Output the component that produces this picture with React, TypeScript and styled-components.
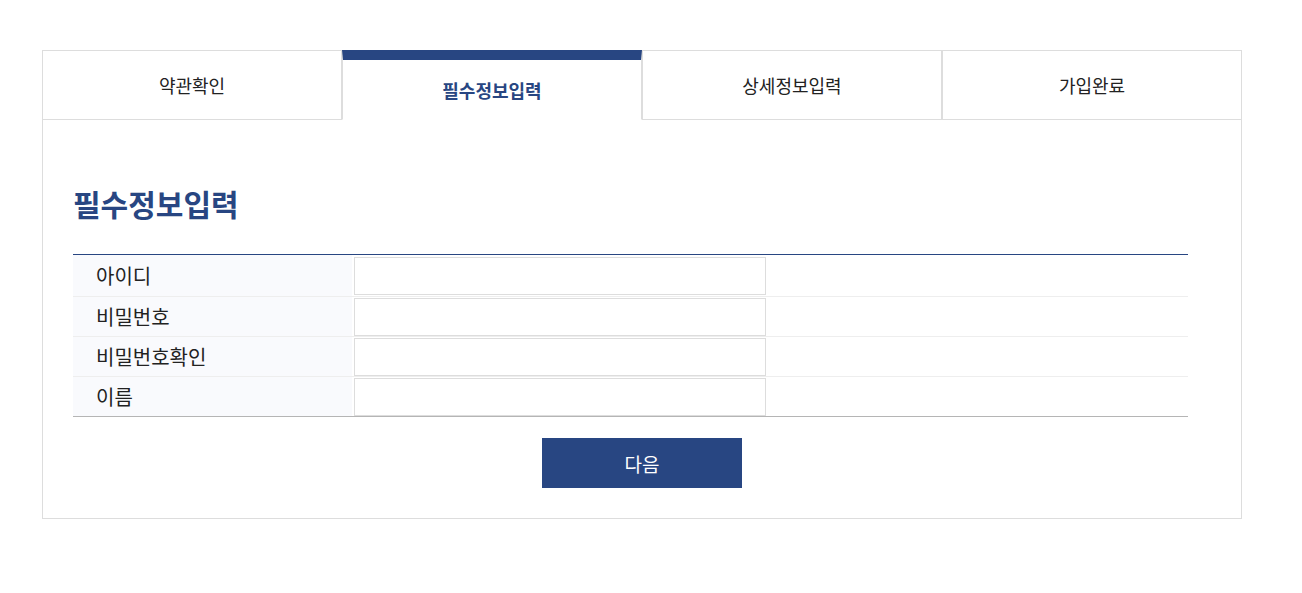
import React from 'react';
import styled, { createGlobalStyle } from 'styled-components';

const GlobalStyle = createGlobalStyle`
  body {
    margin: 0;
    background: #fff;
    font-family: "Noto Sans CJK KR", "Noto Sans", sans-serif;
    color: #222;
  }
`;

const steps = ['약관확인', '필수정보입력', '상세정보입력', '가입완료'];
const fields = ['아이디', '비밀번호', '비밀번호확인', '이름'];

const Wrapper = styled.div`
  width: 1200px;
  margin: 50px 0 0 42px;
`;

const Tabs = styled.ul`
  display: flex;
  margin: 0;
  padding: 0;
  list-style: none;
`;

const Tab = styled.li<{ $active?: boolean }>`
  flex: 1;
  height: 70px;
  box-sizing: border-box;
  display: flex;
  align-items: center;
  justify-content: center;
  font-size: 18px;
  border: 1px solid #ddd;
  border-top: ${(p) => (p.$active ? '10px solid #284682' : '1px solid #ddd')};
  border-bottom: ${(p) => (p.$active ? '1px solid transparent' : '1px solid #ddd')};
  color: ${(p) => (p.$active ? '#284682' : '#222')};
  font-weight: ${(p) => (p.$active ? 700 : 400)};
`;

const Body = styled.div`
  border: 1px solid #ddd;
  border-top: none;
  padding: 63px 30px 30px;
`;

const Title = styled.h2`
  margin: 0 0 31px;
  font-size: 30px;
  line-height: 40px;
  font-weight: 700;
  color: #284682;
`;

const Table = styled.div`
  width: 1115px;
  border-top: 1px solid #284682;
  border-bottom: 1px solid #b5b5b5;
`;

const Row = styled.div`
  display: flex;
  align-items: center;
  height: 40px;
  box-sizing: border-box;
  &:first-child {
    height: 41px;
  }
  & + & {
    border-top: 1px solid #eee;
  }
`;

const Label = styled.div`
  width: 256px;
  height: 100%;
  padding-left: 23px;
  display: flex;
  align-items: center;
  background: #f9fafd;
  font-size: 20px;
  color: #222;
`;

const Input = styled.input`
  margin-left: 2px;
  width: 412px;
  height: 38px;
  box-sizing: border-box;
  border: 1px solid #ddd;
  outline: none;
`;

const Button = styled.button`
  display: block;
  margin: 21px auto 0;
  width: 200px;
  height: 50px;
  border: none;
  background: #284682;
  color: #fff;
  font-family: inherit;
  font-size: 19px;
`;

const App: React.FC = () => {
  return (
    <>
      <GlobalStyle />
      <Wrapper>
        <Tabs>
          {steps.map((s, i) => (
            <Tab key={s} $active={i === 1}>{s}</Tab>
          ))}
        </Tabs>
        <Body>
          <Title>필수정보입력</Title>
          <Table>
            {fields.map((f) => (
              <Row key={f}>
                <Label>{f}</Label>
                <Input type={f.startsWith('비밀번호') ? 'password' : 'text'} />
              </Row>
            ))}
          </Table>
          <Button>다음</Button>
        </Body>
      </Wrapper>
    </>
  );
};

export default App;
